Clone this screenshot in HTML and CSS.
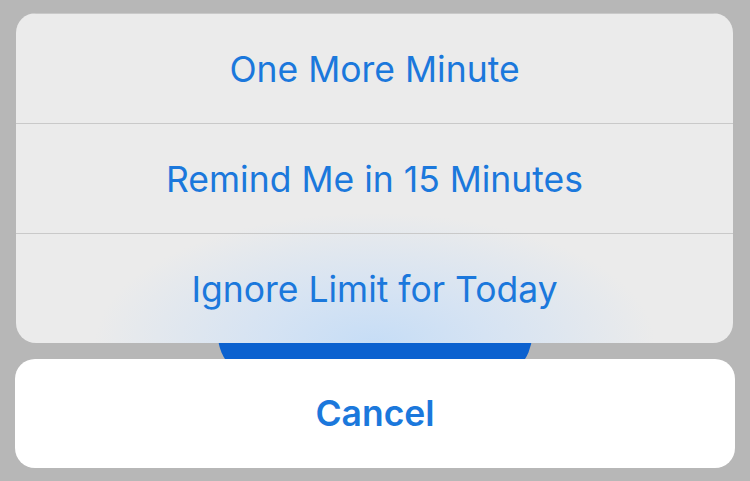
FILE: index.html
```html
<!DOCTYPE html>
<html>
<head>
<meta charset="utf-8">
<link rel="stylesheet" href="styles.css">
</head>
<body>
<div class="screen">
  <div class="behind-button"></div>
  <div class="sheet">
    <div class="group">
      <div class="glow"></div>
      <div class="action">One More Minute</div>
      <div class="action">Remind Me in 15 Minutes</div>
      <div class="action">Ignore Limit for Today</div>
    </div>
    <div class="cancel">Cancel</div>
  </div>
</div>
</body>
</html>
```
FILE: styles.css
```css
html, body {
  margin: 0;
  padding: 0;
}
body {
  width: 750px;
  height: 481px;
  overflow: hidden;
  background: #b7b7b7;
  font-family: Inter, "Noto Sans", sans-serif;
}
.screen {
  position: relative;
  width: 750px;
  height: 481px;
}
.behind-button {
  position: absolute;
  left: 218px;
  top: 250px;
  width: 314px;
  height: 130px;
  border-radius: 45px;
  background: #0b61cf;
}
.sheet {
  position: relative;
  display: flex;
  flex-direction: column;
  padding: 13px 15px 0 15px;
  gap: 16px;
}
.group {
  position: relative;
  margin: 0 2px 0 1px;
  background: #ebebeb;
  border-radius: 20px;
  overflow: hidden;
}
.glow {
  position: absolute;
  left: 0;
  right: 0;
  top: 0;
  bottom: 0;
  background: radial-gradient(ellipse 280px 130px at 359px 330px, #c6ddf6 0%, rgba(208,225,245,0.8) 40%, rgba(235,235,235,0) 100%);
}
.action {
  position: relative;
  box-sizing: border-box;
  height: 110px;
  padding-top: 2px;
  display: flex;
  align-items: center;
  justify-content: center;
  color: #1b78dc;
  font-size: 35.5px;
  border-top: 1px solid #c9c9c9;
}
.action:first-of-type {
  border-top: none;
}
.cancel {
  height: 109px;
  background: #ffffff;
  border-radius: 20px;
  display: flex;
  align-items: center;
  justify-content: center;
  color: #1b78dc;
  font-size: 35.5px;
  font-weight: 600;
}
```
